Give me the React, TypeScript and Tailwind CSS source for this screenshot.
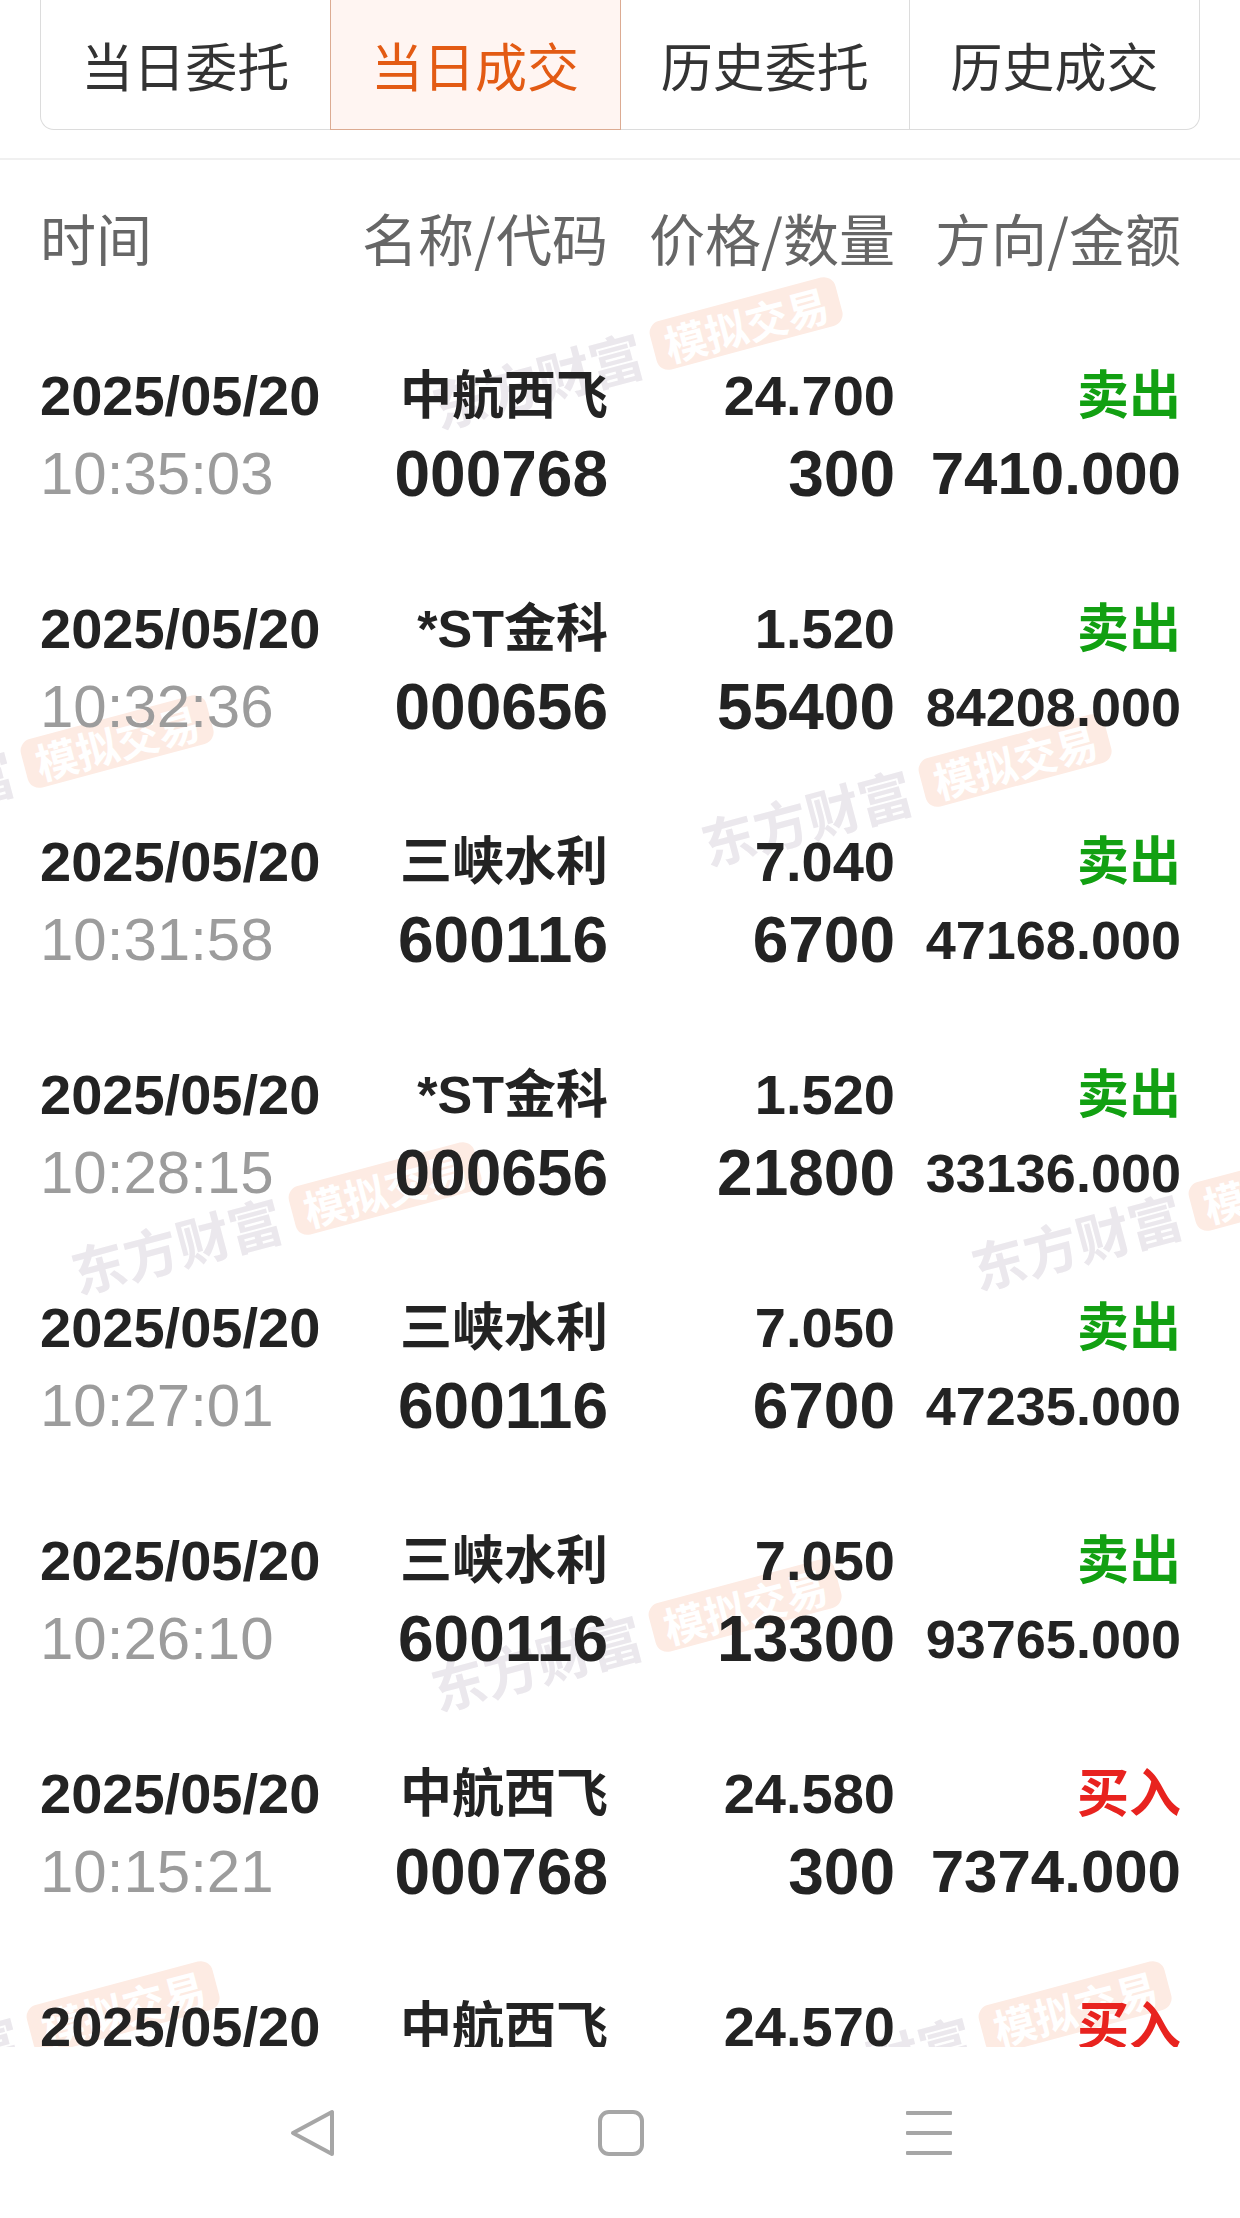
import React from "react";

type Trade = {
  date: string;
  time: string;
  name: string;
  code: string;
  price: string;
  qty: string;
  side: "卖出" | "买入";
  amount: string;
};

const TABS = ["当日委托", "当日成交", "历史委托", "历史成交"];

const TRADES: Trade[] = [
  { date: "2025/05/20", time: "10:35:03", name: "中航西飞", code: "000768", price: "24.700", qty: "300", side: "卖出", amount: "7410.000" },
  { date: "2025/05/20", time: "10:32:36", name: "*ST金科", code: "000656", price: "1.520", qty: "55400", side: "卖出", amount: "84208.000" },
  { date: "2025/05/20", time: "10:31:58", name: "三峡水利", code: "600116", price: "7.040", qty: "6700", side: "卖出", amount: "47168.000" },
  { date: "2025/05/20", time: "10:28:15", name: "*ST金科", code: "000656", price: "1.520", qty: "21800", side: "卖出", amount: "33136.000" },
  { date: "2025/05/20", time: "10:27:01", name: "三峡水利", code: "600116", price: "7.050", qty: "6700", side: "卖出", amount: "47235.000" },
  { date: "2025/05/20", time: "10:26:10", name: "三峡水利", code: "600116", price: "7.050", qty: "13300", side: "卖出", amount: "93765.000" },
  { date: "2025/05/20", time: "10:15:21", name: "中航西飞", code: "000768", price: "24.580", qty: "300", side: "买入", amount: "7374.000" },
  { date: "2025/05/20", time: "10:12:44", name: "中航西飞", code: "000768", price: "24.570", qty: "300", side: "买入", amount: "7371.000" },
];

// watermark centres, page coords
const MARKS = [
  { x: 636, y: 353 },
  { x: 7, y: 771 },
  { x: 905, y: 790 },
  { x: 275, y: 1218 },
  { x: 1175, y: 1214 },
  { x: 635, y: 1635 },
  { x: 13, y: 2037 },
  { x: 965, y: 2037 },
];

const COLS = "grid grid-cols-[284px_284px_287px_286px] pl-[40px]";

function Watermark({ x, y }: { x: number; y: number }) {
  return (
    <div
      className="absolute flex items-center gap-[12px] -translate-x-1/2 -translate-y-1/2 rotate-[-15deg] whitespace-nowrap font-['Noto_Sans_CJK_SC',sans-serif] font-bold leading-none"
      style={{ left: x, top: y }}
    >
      <span className="text-[54px] text-[#ebe8ed]">东方财富</span>
      <span className="flex h-[50px] items-center rounded-[12px] bg-[#fdebe3] px-[12px] text-[42px] text-white">
        模拟交易
      </span>
    </div>
  );
}

function TradeRow({ t }: { t: Trade }) {
  const sideColor = t.side === "卖出" ? "text-[#12a012]" : "text-[#e8231f]";
  const amountSize = t.amount.length > 8 ? "text-[54px]" : "text-[60px]";

  return (
    <div className={`${COLS} gap-y-[10px] pt-[40px] pb-[47px] leading-none text-[#232323]`}>
      <div className="flex h-[68px] items-center text-[56px] font-bold">{t.date}</div>
      <div className="flex h-[68px] items-center justify-end text-[52px] font-bold">{t.name}</div>
      <div className="flex h-[68px] items-center justify-end text-[56px] font-bold">{t.price}</div>
      <div className={`flex h-[68px] items-center justify-end text-[52px] font-bold ${sideColor}`}>
        {t.side}
      </div>
      <div className="flex h-[68px] items-center text-[60px] text-[#9c9c9c]">{t.time}</div>
      <div className="flex h-[68px] items-center justify-end text-[64px] font-bold">{t.code}</div>
      <div className="flex h-[68px] items-center justify-end text-[64px] font-bold">{t.qty}</div>
      <div className={`flex h-[68px] items-center justify-end font-bold ${amountSize}`}>{t.amount}</div>
    </div>
  );
}

function NavBar() {
  return (
    <div className="flex h-[171px] items-center justify-center gap-[262px] bg-white">
      <svg width="48" height="48" viewBox="0 0 48 48" fill="none" stroke="#a6a6a6" strokeWidth="4" strokeLinejoin="round">
        <path d="M44 3 L44 45 L5 24 Z" />
      </svg>
      <svg width="46" height="46" viewBox="0 0 46 46" fill="none" stroke="#a6a6a6" strokeWidth="4">
        <rect x="2" y="2" width="42" height="42" rx="9" />
      </svg>
      <svg width="46" height="46" viewBox="0 0 46 46" fill="#a6a6a6">
        <rect x="0" y="1" width="46" height="4" rx="1" />
        <rect x="0" y="21" width="46" height="4" rx="1" />
        <rect x="0" y="41" width="46" height="4" rx="1" />
      </svg>
    </div>
  );
}

export default function App() {
  return (
    <div className="flex h-[2218px] w-[1240px] flex-col bg-white font-['Liberation_Sans','Noto_Sans_CJK_SC',sans-serif]">
      <div className="relative flex-1 overflow-hidden">
        <div className="pointer-events-none absolute inset-0">
          {MARKS.map((m, i) => (
            <Watermark key={i} x={m.x} y={m.y} />
          ))}
        </div>

        <div className="relative">
          <div className="px-[40px]">
            <div className="flex h-[130px] font-['Noto_Sans_CJK_SC',sans-serif] text-[52px] leading-none">
              {TABS.map((tab, i) => {
                let cls = "flex flex-1 items-center justify-center border-b ";
                if (i === 0) cls += "rounded-bl-[14px] border-l border-[#dcdcdc] text-[#333333]";
                if (i === 1) cls += "border-x border-[#dcab92] bg-[#fff5f2] text-[#e35b14]";
                if (i === 2) cls += "border-[#dcdcdc] text-[#333333]";
                if (i === 3) cls += "rounded-br-[14px] border-x border-[#dcdcdc] text-[#333333]";
                return (
                  <div key={tab} className={cls}>
                    {tab}
                  </div>
                );
              })}
            </div>
          </div>

          <div className="mt-[28px] h-[2px] bg-[#f0f0f0]" />

          <div className={`${COLS} h-[162px] items-center pb-[8px] font-['Noto_Sans_CJK_SC',sans-serif] text-[56px] leading-none text-[#666666]`}>
            <div>时间</div>
            <div className="text-right">名称/代码</div>
            <div className="text-right">价格/数量</div>
            <div className="text-right">方向/金额</div>
          </div>

          {TRADES.map((t, i) => (
            <TradeRow key={i} t={t} />
          ))}
        </div>
      </div>

      <NavBar />
    </div>
  );
}
